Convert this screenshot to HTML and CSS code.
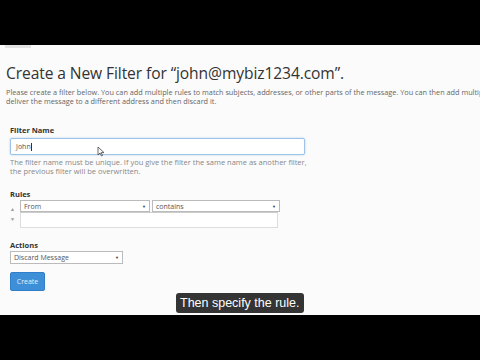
FILE: index.html
```html
<!DOCTYPE html>
<html>
<head>
<meta charset="utf-8">
<link rel="stylesheet" href="styles.css">
</head>
<body>
<div class="frame">
  <div class="bar"></div>
  <div class="page">
    <div class="tab"></div>
    <h1 class="title">Create a New Filter for “john@mybiz1234.com”.</h1>
    <p class="intro"><span class="line">Please create a filter below. You can add multiple rules to match subjects, addresses, or other parts of the message. You can then add multiple actions to take on a message such as to</span><span class="line">deliver the message to a different address and then discard it.</span></p>
    <div class="group">
      <div class="label">Filter Name</div>
      <div class="input focus"><span>John</span><span class="caret"></span></div>
      <div class="help"><span class="line">The filter name must be unique. If you give the filter the same name as another filter,</span><span class="line">the previous filter will be overwritten.</span></div>
    </div>
    <div class="group rules-group">
      <div class="label">Rules</div>
      <div class="rule">
        <div class="arrows"><span>▲</span><span>▼</span></div>
        <div class="rule-fields">
          <div class="selects">
            <div class="select w-from"><span>From</span><span class="dd">▼</span></div>
            <div class="select w-cont"><span>contains</span><span class="dd">▼</span></div>
          </div>
          <div class="textarea"></div>
        </div>
      </div>
    </div>
    <div class="group actions-group">
      <div class="label">Actions</div>
      <div class="select w-act"><span>Discard Message</span><span class="dd">▼</span></div>
    </div>
    <div class="btn">Create</div>
    <div class="caption">Then specify the rule.</div>
    <svg class="cursor" width="8" height="11" viewBox="0 0 8 11"><path d="M1 1 L1 9 L3 7 L4.5 10 L5.5 9.5 L4.2 6.6 L7 6.6 Z" fill="#fff" stroke="#444" stroke-width="0.8"/></svg>
  </div>
  <div class="bar"></div>
</div>
</body>
</html>
```
FILE: styles.css
```css
html, body { margin: 0; padding: 0; background: #000; }
.frame { width: 480px; height: 360px; display: flex; flex-direction: column; overflow: hidden; }
.bar { height: 45px; background: #000; flex: none; }
.page {
  height: 270px; flex: none; background: #fbfbfb; position: relative; overflow: hidden;
  font-family: "Open Sans", "Liberation Sans", sans-serif; color: #333;
  padding: 0 6px; box-sizing: border-box;
}
.tab { width: 26px; height: 3px; background: #e2e2e2; margin-left: -1px; }
.title { font-size: 15.6px; font-weight: 400; margin: 15px 0 0 0; line-height: 20px; color: #333; white-space: nowrap; letter-spacing: -0.1px; }
.intro { font-size: 7.3px; color: #666; margin: 5px 0 0 0; line-height: 9px; }
.line { display: block; white-space: nowrap; }
.group { margin-left: 4px; }
.label { font-size: 7.5px; font-weight: 700; color: #333; line-height: 10px; margin-top: 19px; }
.input {
  width: 295px; height: 17px; box-sizing: border-box; margin-top: 3px;
  border: 1px solid #9ec3e6; border-radius: 2px; background: #fff;
  font-size: 7px; color: #555; padding: 0 5px; display: flex; align-items: center;
  box-shadow: 0 0 2px rgba(102,175,233,0.6);
}
.caret { width: 1px; height: 8px; background: #333; margin-left: 0.5px; }
.help { font-size: 7.5px; color: #888; line-height: 9px; margin-top: 3px; }
.rules-group .label { margin-top: 13px; }
.rule { display: flex; margin-top: 1px; }
.arrows { width: 10px; display: flex; flex-direction: column; font-size: 5px; line-height: 5px; color: #999; padding-top: 7px; gap: 5px; }
.selects { display: flex; gap: 2px; }
.select {
  height: 12px; box-sizing: border-box; border: 1px solid #bbb; background: #fff;
  font-size: 7px; color: #555; display: flex; justify-content: space-between; align-items: center; padding: 0 3px;
}
.dd { font-size: 4px; color: #333; }
.w-from { width: 130px; }
.w-cont { width: 128px; }
.textarea { width: 258px; height: 16px; box-sizing: border-box; border: 1px solid #ddd; border-top-color: #ccc; background: #fff; }
.actions-group .label { margin-top: 12px; }
.w-act { width: 113px; height: 13px; margin-top: 1px; }
.btn {
  margin: 8px 0 0 4px; width: 35px; height: 19px; background: #3d8fd8; border-radius: 2px;
  color: #e6f0fa; font-size: 7px; display: flex; align-items: center; justify-content: center;
  border: 1px solid #2f7fc8; box-sizing: border-box;
}
.caption {
  position: absolute; left: 176px; top: 248px; height: 20px; padding: 0 4px;
  background: rgba(30,30,30,0.9); border-radius: 3px; color: #fff;
  font-family: "Liberation Sans", Arial, sans-serif; font-size: 12.5px; line-height: 20px;
}
.cursor { position: absolute; left: 97px; top: 101px; }
```
